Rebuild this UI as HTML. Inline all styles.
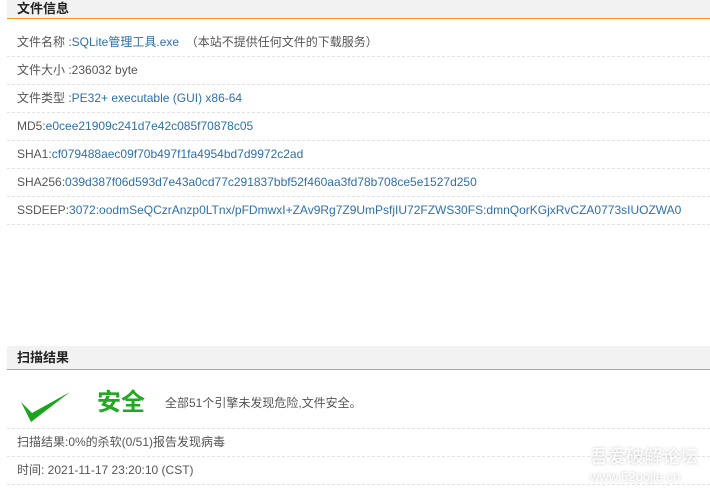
<!DOCTYPE html>
<html><head><meta charset="utf-8"><style>
body{margin:0;width:710px;height:495px;background:#fff;font-family:"Liberation Sans","Noto Sans CJK SC",sans-serif;font-size:12px;color:#555;position:relative;overflow:hidden}
.h{position:absolute;left:7px;width:703px;background:#f2f2f2;border-bottom:1px solid #f39a1b;font-weight:bold;font-size:13px;color:#222;box-sizing:border-box;padding-left:10px}
.r{position:absolute;left:7px;width:703px;height:28px;line-height:27px;border-bottom:1px dashed #e2e2e2;box-sizing:border-box;padding-left:10px;white-space:nowrap}
.b{color:#2d6fae}
</style></head><body>
<div class="h" style="top:0;height:19px;line-height:17px">文件信息</div>
<div class="r" style="top:29px">文件名称 :<span class="b">SQLite管理工具.exe</span> &nbsp;（本站不提供任何文件的下载服务）</div>
<div class="r" style="top:57px">文件大小 :236032 byte</div>
<div class="r" style="top:85px">文件类型 :<span class="b">PE32+ executable (GUI) x86-64</span></div>
<div class="r" style="top:113px">MD5:<span class="b">e0cee21909c241d7e42c085f70878c05</span></div>
<div class="r" style="top:141px">SHA1:<span class="b">cf079488aec09f70b497f1fa4954bd7d9972c2ad</span></div>
<div class="r" style="top:169px">SHA256:<span class="b">039d387f06d593d7e43a0cd77c291837bbf52f460aa3fd78b708ce5e1527d250</span></div>
<div class="r" style="top:197px">SSDEEP:<span class="b">3072:oodmSeQCzrAnzp0LTnx/pFDmwxI+ZAv9Rg7Z9UmPsfjIU72FZWS30FS:dmnQorKGjxRvCZA0773sIUOZWA0</span></div>
<div class="h" style="top:346px;height:24px;line-height:24px">扫描结果</div>
<svg style="position:absolute;left:20px;top:391px" width="52" height="32" viewBox="0 0 52 32"><path d="M1 11 L12 22 L50 1 L11 31 Z" fill="#1aa51a"/></svg>
<div style="position:absolute;left:97px;top:388px;font-size:24px;font-weight:bold;color:#22a822;line-height:30px">安全</div>
<div style="position:absolute;left:165px;top:395px;line-height:16px">全部51个引擎未发现危险,文件安全。</div>
<div class="r" style="top:400px;height:29px;border-bottom:1px dashed #e2e2e2;background:transparent"></div>
<div class="r" style="top:429px">扫描结果:0%的杀软(0/51)报告发现病毒</div>
<div class="r" style="top:457px">时间: 2021-11-17 23:20:10 (CST)</div>
<div style="position:absolute;left:590px;top:447px;color:#fff;text-shadow:0 0 3px #bbb;font-size:18px;line-height:20px">吾爱破解论坛</div>
<div style="position:absolute;left:590px;top:469px;color:#fff;text-shadow:0 0 3px #bbb;font-size:13px;line-height:16px">www.52pojie.cn</div>
</body></html>
